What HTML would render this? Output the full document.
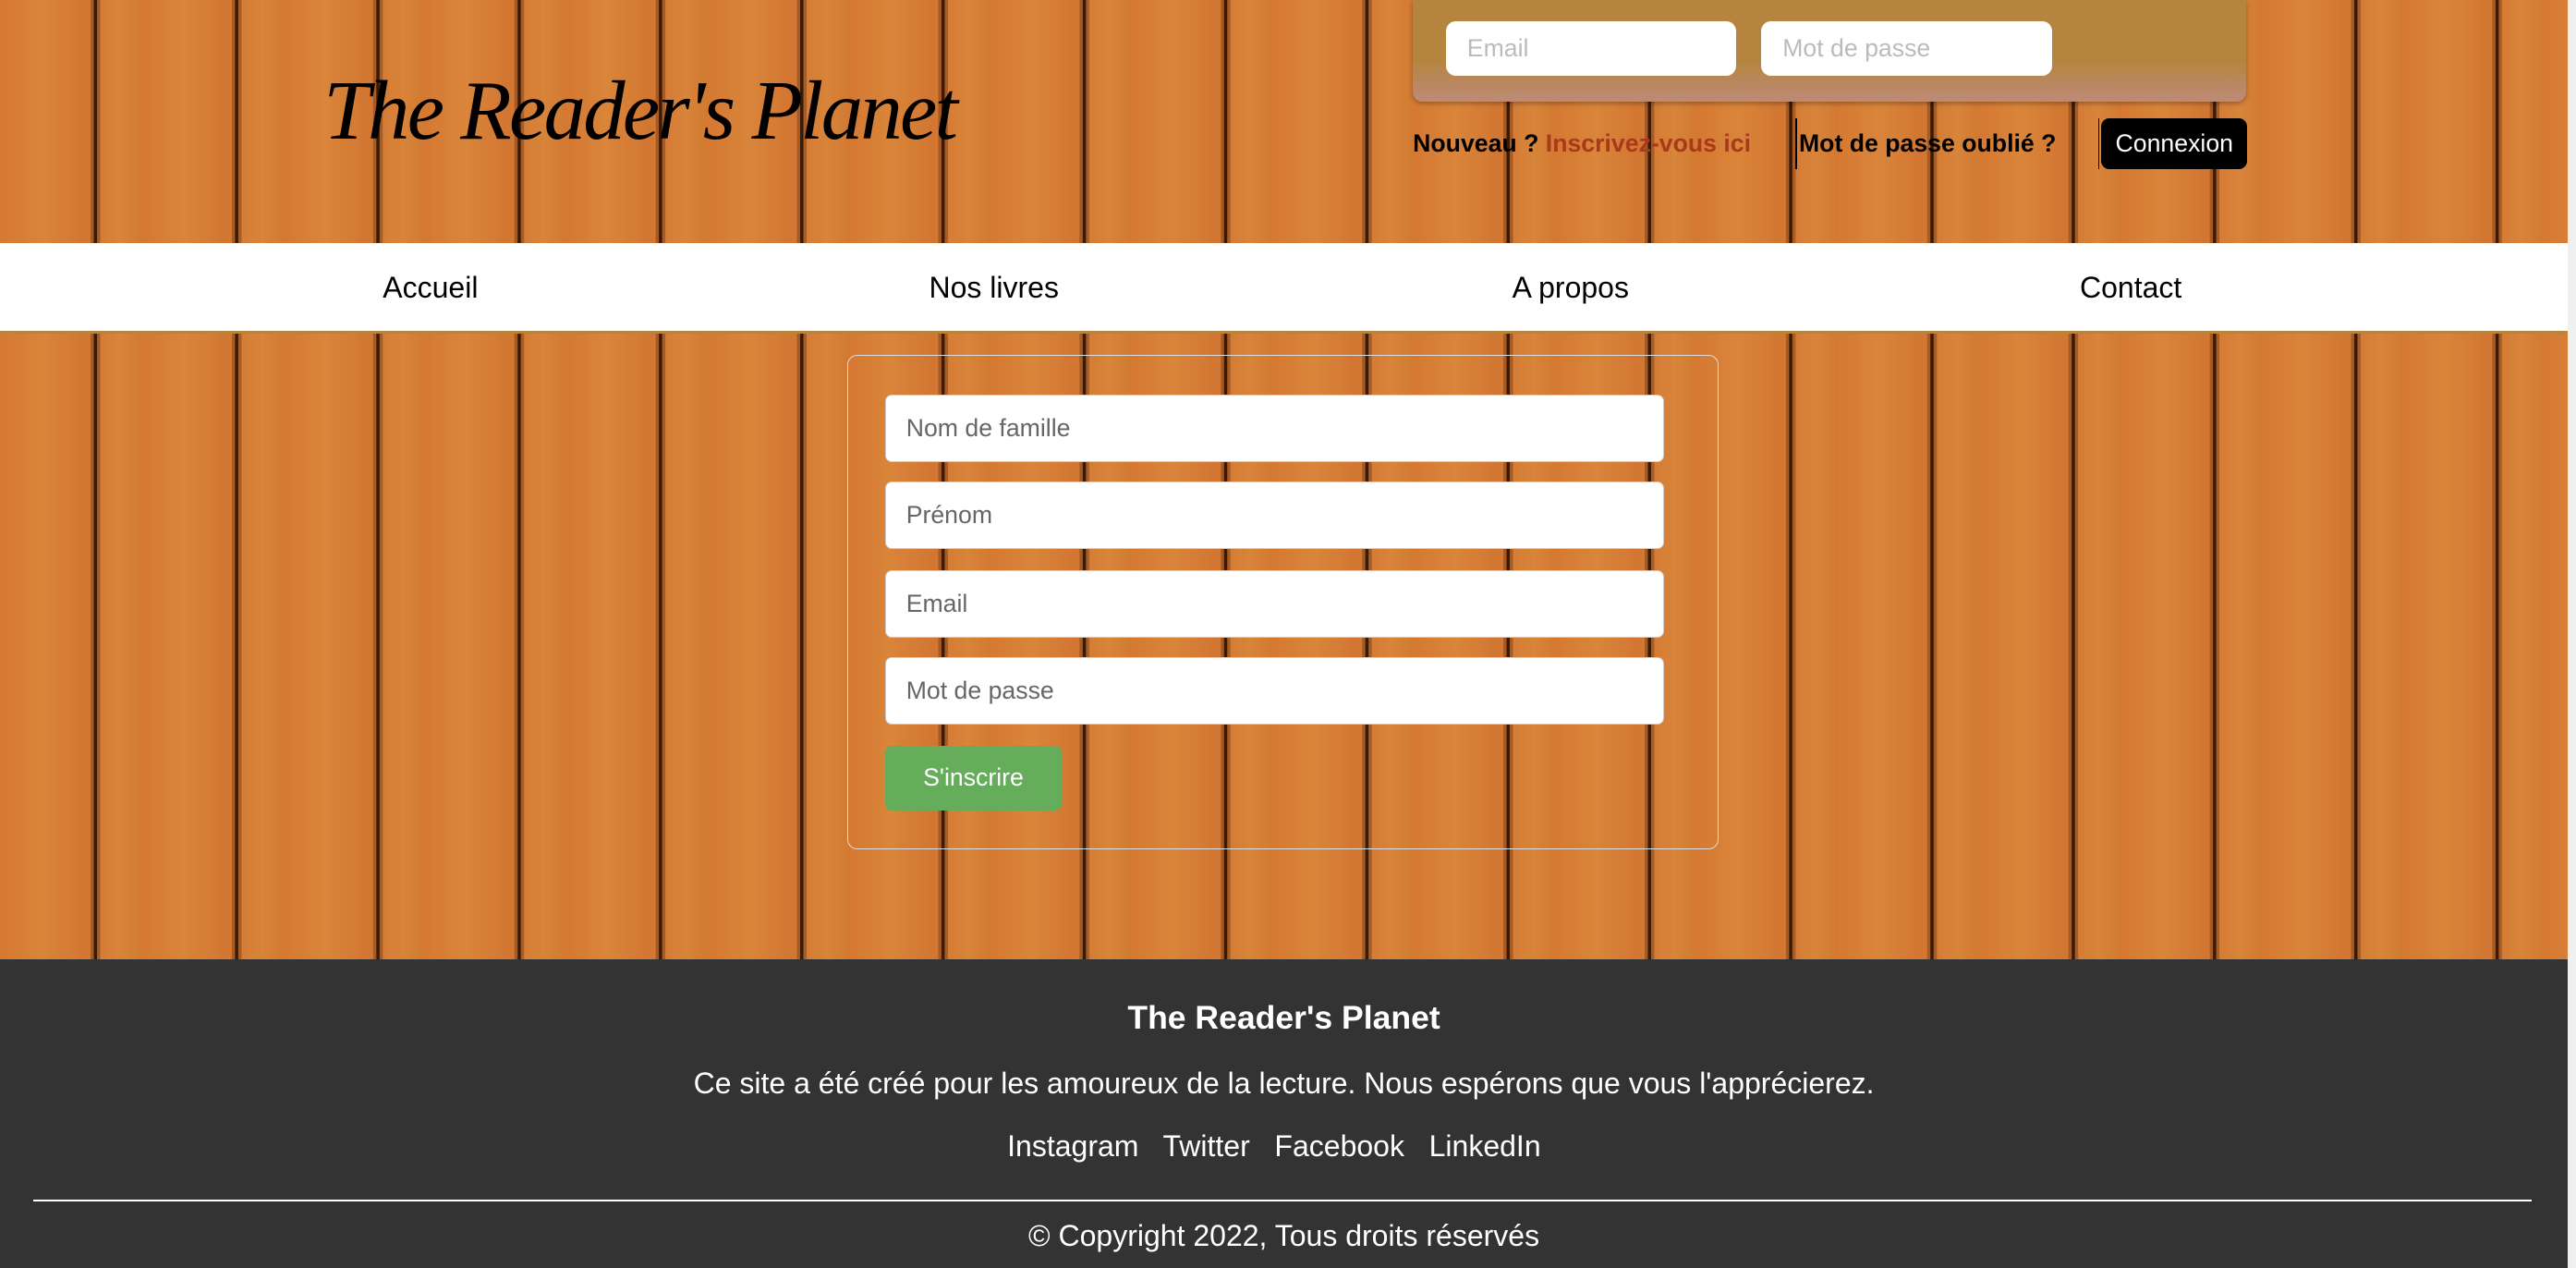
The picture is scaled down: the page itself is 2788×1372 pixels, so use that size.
<!DOCTYPE html>
<html><head><meta charset="utf-8"><style>
html,body{margin:0;padding:0;width:2788px;height:1372px;overflow:hidden;background:#f0f0f0}
#w{zoom:1.77806;width:1568px;height:772px;position:relative;font-family:"Liberation Sans",Arial,sans-serif}
.wood{position:absolute;left:0;width:1563px;
background:
repeating-linear-gradient(90deg,transparent 0 53px,rgba(60,20,0,.3) 53px 55px,#3a1a05 55px 57px,rgba(60,20,0,.3) 57px 59px,transparent 59px 86px),
linear-gradient(90deg,#d57832,#d9853a 30%,#d27632 60%,#d8843a 85%,#d27a32);
background-size:86px 100%,86px 100%;background-position:2px 0,0 0}
.in{position:absolute;background:#fff;border-radius:6px;box-sizing:border-box;color:#bbb;font-size:15px;padding-left:13px;display:flex;align-items:center}
.fi{position:absolute;left:539px;width:474px;height:41px;background:#fff;border:1px solid #ccc;border-radius:4px;box-sizing:border-box;color:#666;font-size:15px;padding-left:12px;display:flex;align-items:center}
.nav{position:absolute;font-size:18px;transform:translateX(-50%);line-height:1;top:166px}
</style></head><body><div id="w">
<div class="wood" style="top:0;height:148px"></div>
<div class="wood" style="top:202px;height:382px"></div>
<div style="position:absolute;left:860px;top:0;width:507px;height:62px;border-radius:0 0 6px 6px;background:linear-gradient(#b5853f 0,#b5853f 60%,#bd8a78 100%);box-shadow:0 1px 3px rgba(0,0,0,.3)"></div>
<div class="in" style="left:880px;top:13px;width:177px;height:33px">Email</div>
<div class="in" style="left:1072px;top:13px;width:177px;height:33px">Mot de passe</div>
<div style="position:absolute;left:197px;top:42px;font-family:'Liberation Serif',serif;font-style:italic;font-size:51px;letter-spacing:-1.5px;color:#000;line-height:1">The Reader's Planet</div>
<div style="position:absolute;left:860px;top:79px;font-size:15px;font-weight:bold;color:#000">Nouveau ? <span style="color:#a83a1a">Inscrivez-vous ici</span></div>
<div style="position:absolute;left:1093px;top:72px;width:1px;height:31px;background:#000"></div>
<div style="position:absolute;left:1095px;top:79px;font-size:15px;font-weight:bold;color:#000">Mot de passe oublié ?</div>
<div style="position:absolute;left:1277px;top:72px;width:1px;height:31px;background:#000"></div>
<div style="position:absolute;left:1279px;top:72px;width:89px;height:31px;background:#000;border-radius:5px;color:#fff;font-size:15px;display:flex;align-items:center;justify-content:center">Connexion</div>
<div style="position:absolute;left:0;top:148px;width:1563px;height:55px;background:#fff;border-bottom:2px solid #b5853f;box-sizing:border-box"></div>
<div class="nav" style="left:262px">Accueil</div>
<div class="nav" style="left:605px">Nos livres</div>
<div class="nav" style="left:956px">A propos</div>
<div class="nav" style="left:1297px">Contact</div>
<div style="position:absolute;left:516px;top:216px;width:530px;height:301px;border:1px solid #ddd;border-radius:6px;box-sizing:border-box"></div>
<div class="fi" style="top:240px">Nom de famille</div>
<div class="fi" style="top:293px">Prénom</div>
<div class="fi" style="top:347px">Email</div>
<div class="fi" style="top:400px">Mot de passe</div>
<div style="position:absolute;left:539px;top:454px;width:107px;height:39px;background:#65ac5b;border-radius:4px;color:#fff;font-size:15px;display:flex;align-items:center;justify-content:center">S'inscrire</div>
<div style="position:absolute;left:0;top:584px;width:1563px;height:188px;background:#333;color:#fff;text-align:center">
<div style="position:absolute;left:0;right:0;top:24px;font-size:20px;font-weight:bold">The Reader's Planet</div>
<div style="position:absolute;left:0;right:0;top:65px;font-size:18px">Ce site a été créé pour les amoureux de la lecture. Nous espérons que vous l'apprécierez.</div>
<div style="position:absolute;left:0;right:0;top:103px;font-size:18px;padding-right:12px">Instagram&nbsp;&nbsp; Twitter&nbsp;&nbsp; Facebook&nbsp;&nbsp; LinkedIn</div>
<div style="position:absolute;left:20px;right:22px;top:146px;height:1px;background:#fff"></div>
<div style="position:absolute;left:0;right:0;top:158px;font-size:18px;padding-left:0">© Copyright 2022, Tous droits réservés</div>
</div>
</div></body></html>
